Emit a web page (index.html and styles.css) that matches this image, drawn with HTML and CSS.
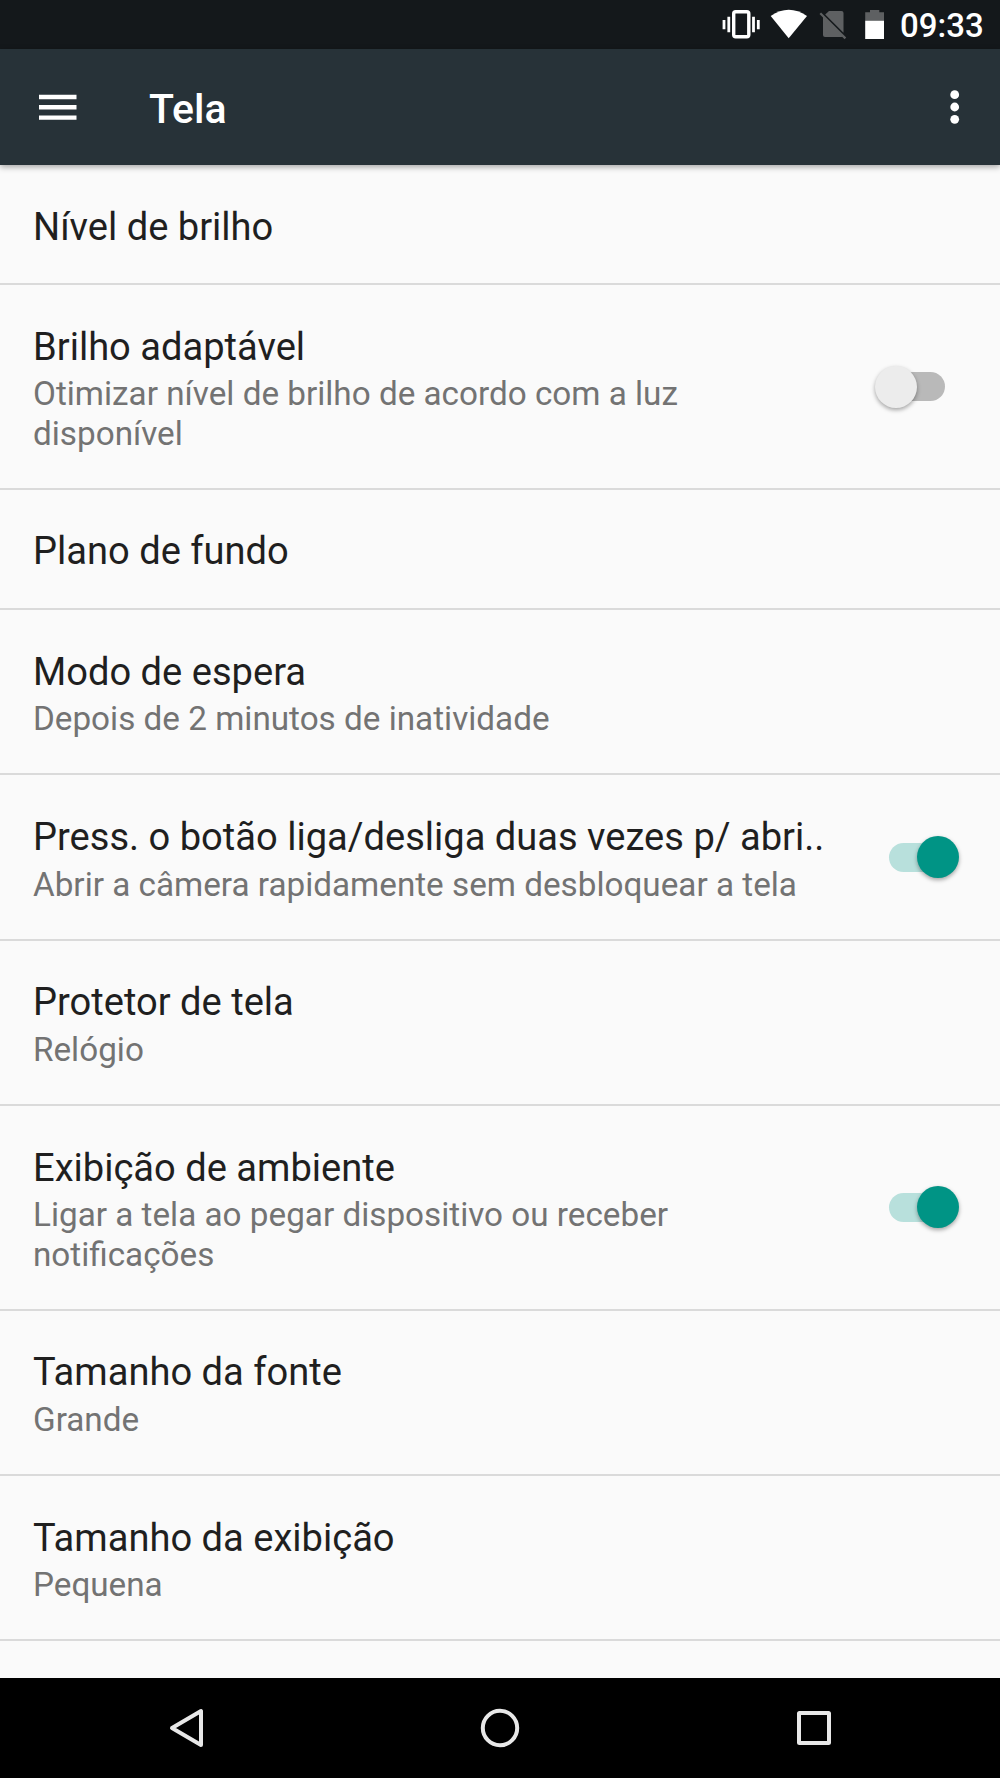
FILE: index.html
```html
<!DOCTYPE html>
<html lang="pt-BR">
<head>
    <meta charset="UTF-8">
    <meta name="viewport" content="width=device-width, initial-scale=1.0">
    <title>Tela</title>
    <link rel="stylesheet" href="styles.css">
</head>
<body>

<div class="screen">
    <div class="status-bar">
        <svg width="190" height="49" viewBox="0 0 190 49">
            <!-- vibrate -->
            <rect x="23.7" y="11.8" width="15.1" height="25" rx="2" fill="none" stroke="#fff" stroke-width="3.4"/>
            <path d="M14 20v9.3M18.8 16.7v15.6M43.5 16.7v15.6M48.3 20v9.3" stroke="#fff" stroke-width="2.8"/>
            <!-- wifi -->
            <path d="M60.7 16Q78.7 3.5 97 16L78.7 38.3Z" fill="#fff"/>
            <!-- no sim -->
            <path d="M119 11H131.5a2 2 0 0 1 2 2V32.7L115.2 14.6Z" fill="#5e6062"/>
            <path d="M113 16L133 36Q132.5 37 131.5 37H115a2 2 0 0 1-2-2Z" fill="#5e6062"/>
            <path d="M110.3 13.2L135.4 38.4" stroke="#5e6062" stroke-width="2.2"/>
            <!-- battery -->
            <path d="M155.2 12.3H160V10h9.3v2.3H174V20.7H155.2Z" fill="#5e6062"/>
            <path d="M155.2 20.7H174V39H155.2Z" fill="#fff"/>
        </svg>
        <span class="clock">09:33</span>
    </div>

    <div class="toolbar">
        <svg class="menu" width="38" height="28" viewBox="0 0 38 28">
            <path d="M0 4h37.5M0 14.2h37.5M0 24.6h37.5" stroke="#fff" stroke-width="4.4"/>
        </svg>
        <h1>Tela</h1>
        <svg class="more" width="10" height="36" viewBox="0 0 10 36">
            <circle cx="4.7" cy="5.7" r="4.4"/>
            <circle cx="4.7" cy="18" r="4.4"/>
            <circle cx="4.7" cy="30.3" r="4.4"/>
        </svg>
    </div>

    <div class="list">
        <div class="item">
            <div class="text">
                <div class="title">Nível de brilho</div>
            </div>
        </div>
        <div class="item">
            <div class="text">
                <div class="title">Brilho adaptável</div>
                <div class="summary">Otimizar nível de brilho de acordo com a luz<br>disponível</div>
            </div>
            <div class="switch"><div class="thumb"></div></div>
        </div>
        <div class="item">
            <div class="text">
                <div class="title">Plano de fundo</div>
            </div>
        </div>
        <div class="item">
            <div class="text">
                <div class="title">Modo de espera</div>
                <div class="summary">Depois de 2 minutos de inatividade</div>
            </div>
        </div>
        <div class="item">
            <div class="text">
                <div class="title">Press. o botão liga/desliga duas vezes p/ abri..</div>
                <div class="summary">Abrir a câmera rapidamente sem desbloquear a tela</div>
            </div>
            <div class="switch on"><div class="thumb"></div></div>
        </div>
        <div class="item">
            <div class="text">
                <div class="title">Protetor de tela</div>
                <div class="summary">Relógio</div>
            </div>
        </div>
        <div class="item">
            <div class="text">
                <div class="title">Exibição de ambiente</div>
                <div class="summary">Ligar a tela ao pegar dispositivo ou receber<br>notificações</div>
            </div>
            <div class="switch on"><div class="thumb"></div></div>
        </div>
        <div class="item">
            <div class="text">
                <div class="title">Tamanho da fonte</div>
                <div class="summary">Grande</div>
            </div>
        </div>
        <div class="item">
            <div class="text">
                <div class="title">Tamanho da exibição</div>
                <div class="summary">Pequena</div>
            </div>
        </div>
    </div>

    <div class="nav-bar">
        <div class="nav-button">
            <svg width="44" height="44" viewBox="0 0 44 44">
                <path d="M37 5V39L8 22Z"/>
            </svg>
        </div>
        <div class="nav-button">
            <svg width="44" height="44" viewBox="0 0 44 44">
                <circle cx="22" cy="22" r="17.2"/>
            </svg>
        </div>
        <div class="nav-button">
            <svg width="44" height="44" viewBox="0 0 44 44">
                <rect x="7" y="7" width="30" height="30" rx="0.5"/>
            </svg>
        </div>
    </div>
</div>

</body>
</html>
```
FILE: styles.css
```css
* {
    box-sizing: border-box;
}
body {
    margin: 0;
    font-family: Roboto, sans-serif;
    background-color: #fafafa;
}
.screen {
    display: flex;
    flex-direction: column;
    width: 1000px;
    height: 1778px;
    overflow: hidden;
}

.status-bar {
    display: flex;
    flex: none;
    justify-content: flex-end;
    height: 49px;
    padding-right: 18px;
    background-color: #14181b;
}
.clock {
    width: 82px;
    color: #fff;
    font-size: 33px;
    font-weight: 500;
    line-height: 52px;
    text-align: right;
    white-space: nowrap;
}

.toolbar {
    display: flex;
    flex: none;
    align-items: center;
    height: 116px;
    padding: 0 40.5px 0 39px;
    background-color: #273238;
    box-shadow: 0 2px 6px rgba(0, 0, 0, 0.35);
    z-index: 1;
}
.toolbar h1 {
    flex: 1;
    margin: 4px 0 0 72px;
    color: #fff;
    font-size: 41px;
    font-weight: 500;
    line-height: 48px;
}
.more {
    fill: #fff;
}

.list {
    flex: 1;
    min-height: 0;
    overflow: hidden;
}
.item {
    display: flex;
    align-items: center;
    padding-right: 41px;
    border-bottom: 2px solid #dadada;
}
.text {
    flex: 1;
    padding: 39.5px 0 34.7px 33px;
    white-space: nowrap;
}
.title {
    color: #1f1f1f;
    font-size: 38.1px;
    line-height: 44px;
}
.summary {
    margin-top: 5.6px;
    color: #737373;
    font-size: 33.25px;
    line-height: 39.5px;
}

.switch {
    display: flex;
    align-items: center;
    width: 56px;
    height: 29px;
    margin-right: 14px;
    border-radius: 15px;
    background-color: #b9b9b9;
}
.thumb {
    flex: none;
    width: 42px;
    height: 42px;
    margin-left: -14px;
    border-radius: 50%;
    background-color: #ececec;
    box-shadow: 0 2px 4px rgba(0, 0, 0, 0.35);
}
.switch.on {
    background-color: #b8e0dc;
}
.switch.on .thumb {
    margin-left: 28px;
    background-color: #009485;
}

.nav-bar {
    display: flex;
    flex: none;
    justify-content: center;
    height: 100px;
    background-color: #000;
}
.nav-button {
    display: flex;
    align-items: center;
    justify-content: center;
    width: 314px;
}
.nav-button svg {
    fill: none;
    stroke: #e8e8e8;
    stroke-width: 4;
    stroke-linejoin: round;
}
```
